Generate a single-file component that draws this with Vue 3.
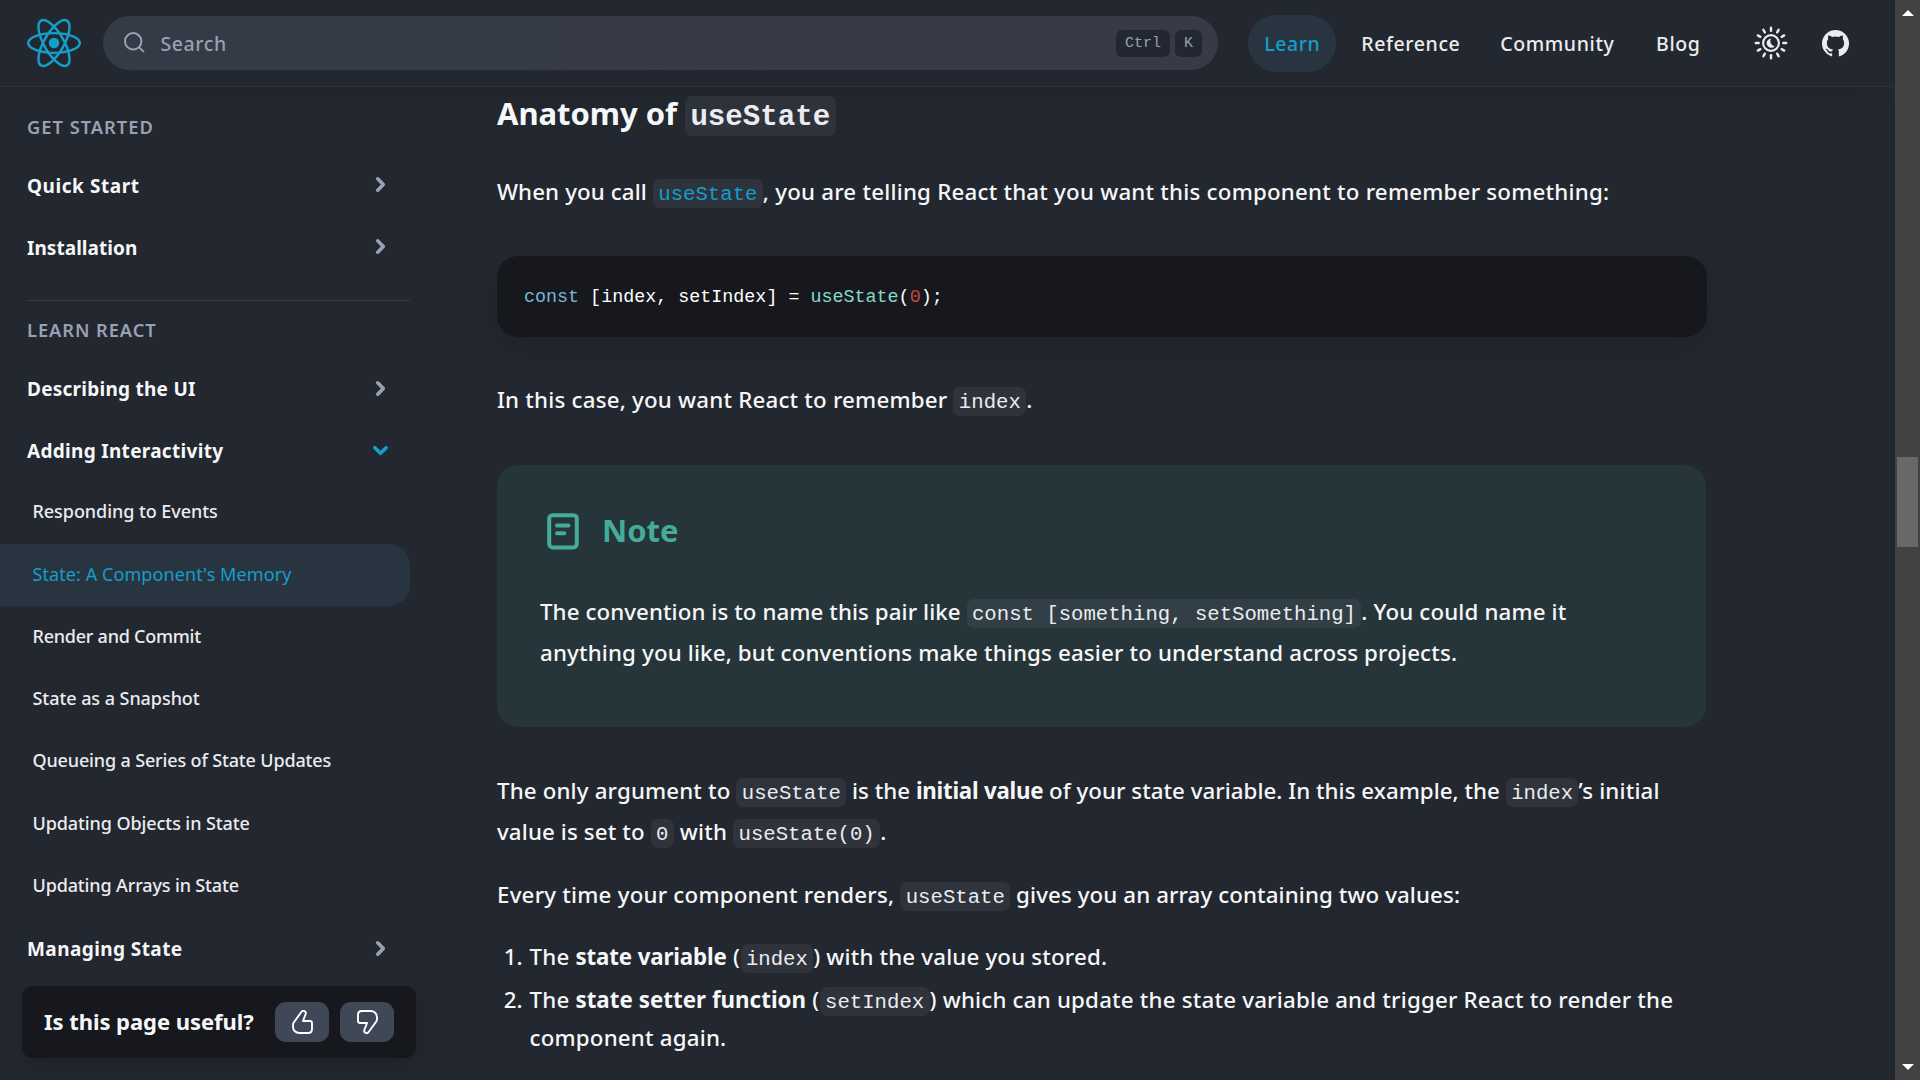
<script setup>
const nav = [
  { label: 'Learn', width: 88, active: true },
  { label: 'Reference', width: 137 },
  { label: 'Community', width: 144 },
  { label: 'Blog', width: 86 },
]

const sections = [
  {
    title: 'GET STARTED',
    track: 1,
    items: [
      { label: 'Quick Start', track: 0.55 },
      { label: 'Installation', track: 0.05 },
    ],
  },
  {
    title: 'LEARN REACT',
    track: 0.92,
    items: [
      { label: 'Describing the UI', track: 0.25 },
      {
        label: 'Adding Interactivity',
        track: 0.3,
        open: true,
        children: [
          { label: 'Responding to Events', track: -0.06 },
          { label: "State: A Component's Memory", track: 0.08, active: true },
          { label: 'Render and Commit', track: -0.24 },
          { label: 'State as a Snapshot', track: -0.06 },
          { label: 'Queueing a Series of State Updates', track: -0.15 },
          { label: 'Updating Objects in State', track: -0.09 },
          { label: 'Updating Arrays in State', track: -0.14 },
        ],
      },
      { label: 'Managing State', track: 0.42 },
    ],
  },
]

// Each line is a list of runs: [kind, text, tracking]; kinds: t = text, b = bold, c = code, l = linked code
const intro = [[['t', 'When you call ', 0.12], ['l', 'useState'], ['t', ', you are telling React that you want this component to remember something:', 0.22]]]
const remember = [[['t', 'In this case, you want React to remember ', 0.21], ['c', 'index'], ['t', '.', 0]]]
const note = [
  [['t', 'The convention is to name this pair like ', 0.08], ['c', 'const [something, setSomething]'], ['t', '. You could name it', 0.14]],
  [['t', 'anything you like, but conventions make things easier to understand across projects.', 0.15]],
]
const argument = [
  [['t', 'The only argument to ', 0.15], ['c', 'useState'], ['t', ' is the ', 0], ['b', 'initial value', -0.24], ['t', ' of your state variable. In this example, the ', 0.03], ['c', 'index'], ['t', '’s initial', 0.18]],
  [['t', 'value is set to ', 0.12], ['c', '0'], ['t', ' with ', 0.2], ['c', 'useState(0)'], ['t', '.', 0]],
]
const everyTime = [[['t', 'Every time your component renders, ', 0.22], ['c', 'useState'], ['t', ' gives you an array containing two values:', 0.1]]]
const values = [
  [[['t', 'The ', 0.2], ['b', 'state variable', -0.13], ['t', ' (', 0.5], ['c', 'index'], ['t', ') with the value you stored.', 0.17]]],
  [
    [['t', 'The ', 0.2], ['b', 'state setter function', 0.04], ['t', ' (', 0.4], ['c', 'setIndex'], ['t', ') which can update the state variable and trigger React to render the', 0.2]],
    [['t', 'component again.', 0.2]],
  ],
]
const paragraphs = { intro, remember, argument, everyTime }

const rays = Array.from({ length: 12 }, (_, i) => i * 30)
const Runs = (props) =>
  props.lines.map((line) =>
    h('span', { class: 'line' }, line.map(([kind, text, track]) =>
      kind === 'c' || kind === 'l'
        ? h('code', { class: kind === 'l' ? 'chip link' : 'chip' }, text)
        : h(kind === 'b' ? 'strong' : 'span', { style: { letterSpacing: track + 'px' } }, text)
    ))
  )
Runs.props = ['lines']
</script>

<script>
import { h } from 'vue'
</script>

<template>
  <div class="page">
    <div class="site">
      <header class="topbar">
        <svg class="logo" viewBox="-11.5 -10.4 23 20.8" aria-label="React">
          <circle r="2.25" fill="#149eca" />
          <g fill="none" stroke="#149eca" stroke-width="1.05">
            <ellipse rx="11" ry="4.2" />
            <ellipse rx="11" ry="4.2" transform="rotate(60)" />
            <ellipse rx="11" ry="4.2" transform="rotate(120)" />
          </g>
        </svg>
        <div class="search">
          <svg width="21" height="21" viewBox="0 0 21 21" fill="none" stroke="#99a1b3" stroke-width="2" stroke-linecap="round">
            <circle cx="9.2" cy="9.3" r="8.2" />
            <path d="M15 15.2 19.4 19.4" />
          </svg>
          <span class="placeholder">Search</span>
          <kbd class="ctrl">Ctrl</kbd>
          <kbd class="key">K</kbd>
        </div>
        <nav class="links">
          <a v-for="n in nav" :key="n.label" :class="{ active: n.active }" :style="{ width: n.width + 'px' }">{{ n.label }}</a>
        </nav>
        <svg class="theme" width="36" height="36" viewBox="-18 -18 36 36" fill="none" stroke="#ebecf0" stroke-linecap="round">
          <circle r="7.9" stroke-width="2.1" />
          <path v-for="r in rays" :key="r" d="M0-12.3V-15.2" stroke-width="2.4" :transform="`rotate(${r})`" />
          <path d="M0-4.6A4.7 4.7 0 1 0 3.6 3.4A5.4 5.4 0 0 1 0-4.6Z" fill="#ebecf0" stroke="none" />
        </svg>
        <svg class="github" width="27" height="27" viewBox="0 0 20 20" fill="#ebecf0">
          <path d="M10 0a10 10 0 0 0-3.16 19.49c.5.1.68-.22.68-.48l-.01-1.7c-2.78.6-3.37-1.34-3.37-1.34-.46-1.16-1.11-1.47-1.11-1.47-.9-.62.07-.6.07-.6 1 .07 1.53 1.03 1.53 1.03.9 1.52 2.34 1.08 2.91.83.1-.65.35-1.09.63-1.34-2.22-.25-4.55-1.11-4.55-4.94 0-1.1.39-1.99 1.03-2.69a3.6 3.6 0 0 1 .1-2.64s.84-.27 2.75 1.02a9.58 9.58 0 0 1 5 0c1.91-1.3 2.75-1.02 2.75-1.02.55 1.37.2 2.4.1 2.64.64.7 1.03 1.6 1.03 2.69 0 3.84-2.34 4.68-4.57 4.93.36.31.68.92.68 1.85l-.01 2.75c0 .26.18.58.69.48A10 10 0 0 0 10 0" />
        </svg>
      </header>

      <div class="body">
        <aside class="sidebar">
          <section v-for="s in sections" :key="s.title">
            <h3 :style="{ letterSpacing: s.track + 'px' }">{{ s.title }}</h3>
            <template v-for="item in s.items" :key="item.label">
              <a class="item">
                <span :style="{ letterSpacing: item.track + 'px' }">{{ item.label }}</span>
                <svg width="19" height="19" viewBox="-9.5 -9.5 19 19" fill="none" stroke-width="3.6" stroke-linecap="round" stroke-linejoin="round" :class="{ open: item.open }">
                  <path d="M-2.8-5.7 2.8 0-2.8 5.7" />
                </svg>
              </a>
              <a v-for="c in item.children" :key="c.label" class="child" :class="{ active: c.active }">
                <span :style="{ letterSpacing: c.track + 'px' }">{{ c.label }}</span>
              </a>
            </template>
          </section>
        </aside>

        <main>
          <h2>Anatomy of <code class="chip">useState</code></h2>
          <p class="intro"><Runs :lines="paragraphs.intro" /></p>
          <pre class="block"><code><span class="kw">const</span> [index, setIndex] = <span class="fn">useState</span>(<span class="num">0</span>);</code></pre>
          <p><Runs :lines="paragraphs.remember" /></p>
          <div class="note">
            <div class="note-title">
              <svg width="32" height="37" viewBox="0 0 32 37" fill="none" stroke="#44ac99" stroke-width="4" stroke-linecap="round">
                <rect x="2.2" y="2.2" width="27.6" height="32.2" rx="3.4" />
                <path d="M10 12.4H21.5M10 20.3H17.3" />
              </svg>
              <h3>Note</h3>
            </div>
            <p><Runs :lines="note" /></p>
          </div>
          <p class="argument"><Runs :lines="paragraphs.argument" /></p>
          <p class="every"><Runs :lines="paragraphs.everyTime" /></p>
          <ol>
            <li v-for="(v, i) in values" :key="i">
              <span class="marker">{{ i + 1 }}.</span>
              <div><Runs :lines="v" /></div>
            </li>
          </ol>
        </main>
      </div>

      <div class="feedback">
        <span>Is this page useful?</span>
        <button aria-label="Yes">
          <svg width="21" height="24" viewBox="0 0 21 24"><path d="M9.2 2.2C10 .9 11.6.6 12.8 1.3 13.9 2 14 3.2 13.6 4.3L11 11H18C19.4 11 20 12 20 13.2V19C20 21.4 18.4 23 16.2 23H7.5C3.8 23 1 20.4 1 16.8V15C1 14 1.3 13.2 1.9 12.3Z" /></svg>
        </button>
        <button aria-label="No">
          <svg class="down" width="21" height="24" viewBox="0 0 21 24"><path d="M9.2 2.2C10 .9 11.6.6 12.8 1.3 13.9 2 14 3.2 13.6 4.3L11 11H18C19.4 11 20 12 20 13.2V19C20 21.4 18.4 23 16.2 23H7.5C3.8 23 1 20.4 1 16.8V15C1 14 1.3 13.2 1.9 12.3Z" /></svg>
        </button>
      </div>
    </div>

    <div class="scrollbar">
      <svg width="12" height="6" viewBox="0 0 12 6"><path d="M6 0 12 6H0Z" fill="#fff" /></svg>
      <div class="track"><div class="thumb"></div></div>
      <svg width="12" height="6" viewBox="0 0 12 6"><path d="M0 0H12L6 6Z" fill="#fff" /></svg>
    </div>
  </div>
</template>

<style>
body { margin: 0; background: #23272f; overflow: hidden; }
</style>

<style scoped>
.page {
  display: flex;
  width: 1920px;
  height: 1080px;
  overflow: hidden;
  background: #23272f;
  color: #f6f7f9;
  font-family: "Noto Sans", "Open Sans", sans-serif;
}
.site {
  position: relative;
  width: 1895px;
  height: 1080px;
  overflow: hidden;
}
.topbar {
  display: flex;
  align-items: center;
  box-sizing: border-box;
  height: 87px;
  padding: 0 0 0 27px;
  border-bottom: 1px solid #2c3038;
  box-shadow: 0 16px 32px -16px rgba(0, 0, 0, 0.1);
}
.logo { width: 54px; height: 50px; margin-right: 22px; }
.search {
  display: flex;
  align-items: center;
  box-sizing: border-box;
  width: 1115px;
  height: 54px;
  padding: 0 16px 0 21px;
  border-radius: 27px;
  background: linear-gradient(90deg, #343a46 35%, #383b45 60%);
}
.search svg { margin-top: -1px; }
.placeholder {
  flex: 1;
  margin: 1px 0 0 15.5px;
  color: #99a1b3;
  font-size: 19.5px;
  font-weight: 500;
  letter-spacing: 0.6px;
}
kbd {
  height: 27px;
  border-radius: 6px;
  background: #23272f;
  color: #99a1b3;
  font: 15px/28px "Liberation Mono", monospace;
  text-align: center;
}
.ctrl { width: 54px; margin-right: 5px; }
.key { width: 27px; }
.links { display: flex; gap: 6px; margin-left: 30px; }
.links a {
  height: 57px;
  border-radius: 28px;
  color: #ebecf0;
  font-size: 19.5px;
  font-weight: 500;
  line-height: 58px;
  letter-spacing: 0.6px;
  text-indent: 0.6px;
  text-align: center;
}
.links a.active { background: #283541; color: #149eca; }
.theme { margin-left: 32px; }
.github { margin-left: 33px; }
.body { display: flex; }
.sidebar { width: 410px; flex: none; }
section { padding-top: 28px; }
section + section { margin-top: 21px; padding-top: 0; }
section + section::before {
  content: "";
  display: block;
  height: 1px;
  margin: 0 0 17px 27px;
  background: #343a46;
}
.sidebar h3 {
  height: 24px;
  margin: 0 0 15.9px 27px;
  color: #99a1b3;
  font-size: 18.3px;
  font-weight: 600;
  line-height: 24px;
}
section + section h3 { margin-bottom: 16.8px; }
.item {
  display: flex;
  align-items: center;
  justify-content: space-between;
  height: 62px;
  padding: 0 20px 0 27px;
  font-size: 19px;
  font-weight: 700;
  white-space: nowrap;
}
.item svg { stroke: #99a1b3; margin-top: -2px; }
section + section .item svg { margin-top: -0.5px; }
.item svg.open { stroke: #149eca; transform: rotate(90deg); }
.child {
  display: flex;
  align-items: center;
  box-sizing: border-box;
  height: 62.25px;
  padding: 0 0 3.2px 32.5px;
  color: #ebecf0;
  font-size: 18px;
  font-weight: 500;
  white-space: nowrap;
}
.child.active {
  border-radius: 0 21.6px 21.6px 0;
  background: #283541;
  color: #149eca;
  font-weight: 400;
}
main {
  width: 1210px;
  margin-left: 87px;
  font-size: 22.3px;
  font-weight: 500;
  line-height: 41px;
}
h2 {
  margin: 6px 0 38px;
  font-size: 31px;
  font-weight: 700;
  line-height: 40px;
  height: 40px;
  letter-spacing: -0.04px;
}
p { margin: 0; }
main :deep(.line) { display: block; white-space: pre; }
main :deep(strong) { font-weight: 700; }
main :deep(.chip) {
  padding: 3.7px 5.4px 2px;
  border-radius: 7px;
  background: rgba(153, 161, 179, 0.1);
  color: #ebecf0;
  font: 400 20.655px/1 "Liberation Mono", monospace;
  letter-spacing: 0;
}
main :deep(.link) { color: #149eca; }
main h2 .chip {
  padding: 5px 5.4px 2px;
  font-size: 29.16px;
  font-weight: 700;
}
.block {
  box-sizing: border-box;
  height: 81px;
  margin: 44px 0 42px;
  padding: 0 27px;
  border-radius: 21.6px;
  background: #16181d;
  box-shadow: 0 12px 32px rgba(0, 0, 0, 0.12);
  color: #fff;
  font: 18.36px/83px "Liberation Mono", monospace;
}
.block code { font: inherit; }
.kw { color: #77b7d7; }
.fn { color: #86d9ca; }
.num { color: #c64640; }
.note {
  box-sizing: border-box;
  width: 1209px;
  height: 262px;
  margin: 45px 0 43px;
  padding: 44px 43px 0;
  border-radius: 21.6px;
  background: #26353a;
}
.note-title {
  display: flex;
  align-items: center;
  height: 44px;
  margin-bottom: 38px;
  padding-left: 7px;
  color: #44ac99;
}
.note-title h3 {
  margin: -1px 0 0 23px;
  font-size: 31px;
  font-weight: 700;
}
.every { margin-top: 22px; }
ol {
  margin: 22.5px 0 0;
  padding: 0;
  list-style: none;
  line-height: 37.5px;
}
li { display: flex; margin-bottom: 6px; }
.marker { width: 25.5px; margin-right: 7px; text-align: right; }
.feedback {
  position: absolute;
  left: 22px;
  top: 986px;
  display: flex;
  align-items: center;
  box-sizing: border-box;
  width: 394px;
  height: 72px;
  padding: 0 22px;
  border-radius: 11px;
  background: #16181d;
  box-shadow: 0 8px 28px rgba(0, 0, 0, 0.14);
}
.feedback span {
  width: 231px;
  margin-top: -2px;
  font-size: 22px;
  font-weight: 700;
  letter-spacing: -0.05px;
  white-space: nowrap;
}
button {
  display: flex;
  align-items: center;
  justify-content: center;
  width: 54px;
  height: 40px;
  padding: 0;
  border: 0;
  border-radius: 10.8px;
  background: #404756;
}
button + button { margin-left: 11px; }
button path { fill: none; stroke: #fff; stroke-width: 1.9; stroke-linejoin: round; }
.down { transform: rotate(180deg); }
.scrollbar {
  display: flex;
  flex-direction: column;
  align-items: center;
  box-sizing: border-box;
  width: 25px;
  height: 1080px;
  padding: 10px 0;
  background: #424242;
}
.track { flex: 1; width: 21px; padding-top: 441px; }
.thumb { height: 90px; background: #686868; }
</style>
